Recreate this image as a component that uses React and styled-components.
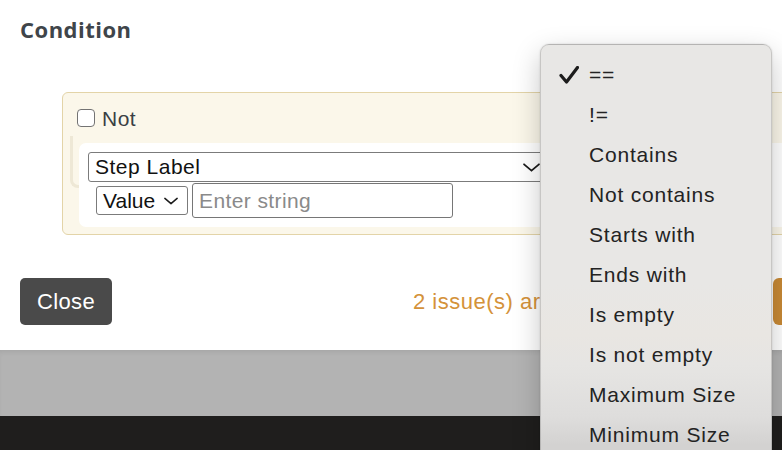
import React from "react";
import styled, { createGlobalStyle } from "styled-components";

const Global = createGlobalStyle`
  html, body { margin: 0; padding: 0; }
  body {
    font-family: "Liberation Sans", Arial, sans-serif;
    overflow: hidden;
    background: #1f1e1d;
  }
`;

const Page = styled.div`
  position: relative;
  width: 782px;
  height: 450px;
  overflow: hidden;
  display: flex;
  flex-direction: column;
`;

const Modal = styled.div`
  height: 350px;
  background: #ffffff;
  padding: 15px 0 0 20px;
  box-sizing: border-box;
  display: flex;
  flex-direction: column;
`;

const Title = styled.h2`
  margin: 0;
  padding-left: 0;
  font-family: "Open Sans", sans-serif;
  font-weight: 700;
  font-size: 22px;
  line-height: 29px;
  letter-spacing: 0.5px;
  color: #3f454a;
`;

const ConditionBox = styled.div`
  margin: 48px -60px 0 42px;
  background: #fbf7ea;
  border: 1px solid #e3d4a8;
  border-radius: 6px;
  padding: 12px 0 7px 14px;
  display: flex;
  flex-direction: column;
`;

const NotRow = styled.label`
  display: flex;
  align-items: center;
  gap: 7px;
  height: 28px;
  font-size: 21px;
  letter-spacing: 0.5px;
  color: #3a3f44;
`;

const Checkbox = styled.span`
  width: 16px;
  height: 16px;
  border: 1px solid #737373;
  border-radius: 4px;
  background: #fff;
  box-sizing: content-box;
  margin-top: -2px;
`;

const RuleGroup = styled.div`
  position: relative;
  margin: 10px 0 0 2px;
  &::before {
    content: "";
    position: absolute;
    left: -9px;
    top: -7px;
    width: 24px;
    height: 49px;
    border-left: 3px solid #eee8d6;
    border-bottom: 3px solid #eee8d6;
    border-bottom-left-radius: 8px;
  }
`;

const RuleCard = styled.div`
  position: relative;
  z-index: 1;
  background: #ffffff;
  border-radius: 7px;
  padding: 9px 0 9px 9px;
  display: flex;
  flex-direction: column;
`;

const SelectBox = styled.div`
  display: flex;
  align-items: center;
  justify-content: space-between;
  box-sizing: border-box;
  width: ${(p) => p.$w}px;
  height: ${(p) => p.$h}px;
  border: 1px solid #7b7b7b;
  border-radius: 3px;
  background: #fff;
  padding: 0 ${(p) => p.$pr}px 0 6px;
  font-size: 21px;
  letter-spacing: ${(p) => p.$ls || 0}px;
  color: #111;
`;

const ValueRow = styled.div`
  display: flex;
  align-items: center;
  gap: 4px;
  margin: 1px 0 0 8px;
`;

const TextInput = styled.div`
  box-sizing: border-box;
  width: 261px;
  height: 35px;
  border: 1px solid #767676;
  border-radius: 3px;
  padding-left: 6px;
  display: flex;
  align-items: center;
  font-size: 21px;
  letter-spacing: 0.4px;
  color: #8a8a8a;
`;

const Footer = styled.div`
  display: flex;
  align-items: center;
  margin-top: 43px;
  margin-right: -60px;
`;

const CloseButton = styled.button`
  width: 92px;
  height: 47px;
  border: none;
  border-radius: 5px;
  background: #4a4a4a;
  color: #fff;
  font-family: "Liberation Sans", Arial, sans-serif;
  font-size: 22px;
  letter-spacing: 0.4px;
  padding: 0;
`;

const IssueText = styled.span`
  margin-left: 301px;
  font-size: 22px;
  letter-spacing: 0.5px;
  color: #d4923a;
  white-space: nowrap;
`;

const SaveButton = styled.button`
  margin-left: auto;
  width: 69px;
  height: 47px;
  border: none;
  border-radius: 6px;
  background: #c98a35;
`;

const Backdrop = styled.div`
  height: 66px;
  background: #b3b3b3;
  box-shadow: inset 0 4px 5px -2px rgba(0, 0, 0, 0.08);
`;

const DarkBar = styled.div`
  flex: 1;
  background: #1f1e1d;
`;

const Menu = styled.ul`
  position: absolute;
  z-index: 10;
  left: 540px;
  top: 44px;
  width: 232px;
  height: 430px;
  margin: 0;
  padding: 10px 0 0;
  list-style: none;
  box-sizing: border-box;
  border-radius: 9px;
  border: 1px solid rgba(0, 0, 0, 0.14);
  background: linear-gradient(
    to bottom,
    #e8e7e5 0px,
    #e8e7e5 240px,
    #e9e6e2 290px,
    #e6e5e3 320px,
    #dedddc 372px,
    #d3d2d1 400px
  );
  box-shadow: 0 10px 28px rgba(0, 0, 0, 0.22), 0 0 2px rgba(0, 0, 0, 0.15);
`;

const MenuItem = styled.li`
  height: 40px;
  display: flex;
  align-items: center;
  padding-left: 18px;
  font-size: 21px;
  letter-spacing: 0.8px;
  color: #232323;
`;

const CheckSlot = styled.span`
  width: 30px;
  display: flex;
  align-items: center;
`;

const Chevron = ({ w, h }) => (
  <svg width={w} height={h} viewBox="0 0 16 8" fill="none">
    <path d="M1 1 L8 7 L15 1" stroke="#1a1a1a" strokeWidth="1.7" strokeLinecap="round" strokeLinejoin="round" />
  </svg>
);

const Check = () => (
  <svg width="20" height="18" viewBox="0 0 20 18" fill="none">
    <path d="M2 9.5 L7.5 16 L18.5 1.5" stroke="#1c1c1c" strokeWidth="3.2" strokeLinecap="round" strokeLinejoin="round" />
  </svg>
);

const ops = [
  "==",
  "!=",
  "Contains",
  "Not contains",
  "Starts with",
  "Ends with",
  "Is empty",
  "Is not empty",
  "Maximum Size",
  "Minimum Size",
];

export default function App() {
  return (
    <>
      <Global />
      <Page>
        <Modal>
          <Title>Condition</Title>
          <ConditionBox>
            <NotRow>
              <Checkbox />
              Not
            </NotRow>
            <RuleGroup>
              <RuleCard>
                <SelectBox $w={457} $h={30} $pr={4} $ls={0.5}>
                  <span>Step Label</span>
                  <Chevron w={17} h={9} />
                </SelectBox>
                <ValueRow>
                  <SelectBox $w={92} $h={29} $pr={9}>
                    <span>Value</span>
                    <Chevron w={14} h={8} />
                  </SelectBox>
                  <TextInput>Enter string</TextInput>
                </ValueRow>
              </RuleCard>
            </RuleGroup>
          </ConditionBox>
          <Footer>
            <CloseButton>Close</CloseButton>
            <IssueText>2 issue(s) are pending</IssueText>
            <SaveButton aria-label="Save" />
          </Footer>
        </Modal>
        <Backdrop />
        <DarkBar />
        <Menu>
          {ops.map((op, i) => (
            <MenuItem key={op}>
              <CheckSlot>{i === 0 ? <Check /> : null}</CheckSlot>
              {op}
            </MenuItem>
          ))}
        </Menu>
      </Page>
    </>
  );
}
